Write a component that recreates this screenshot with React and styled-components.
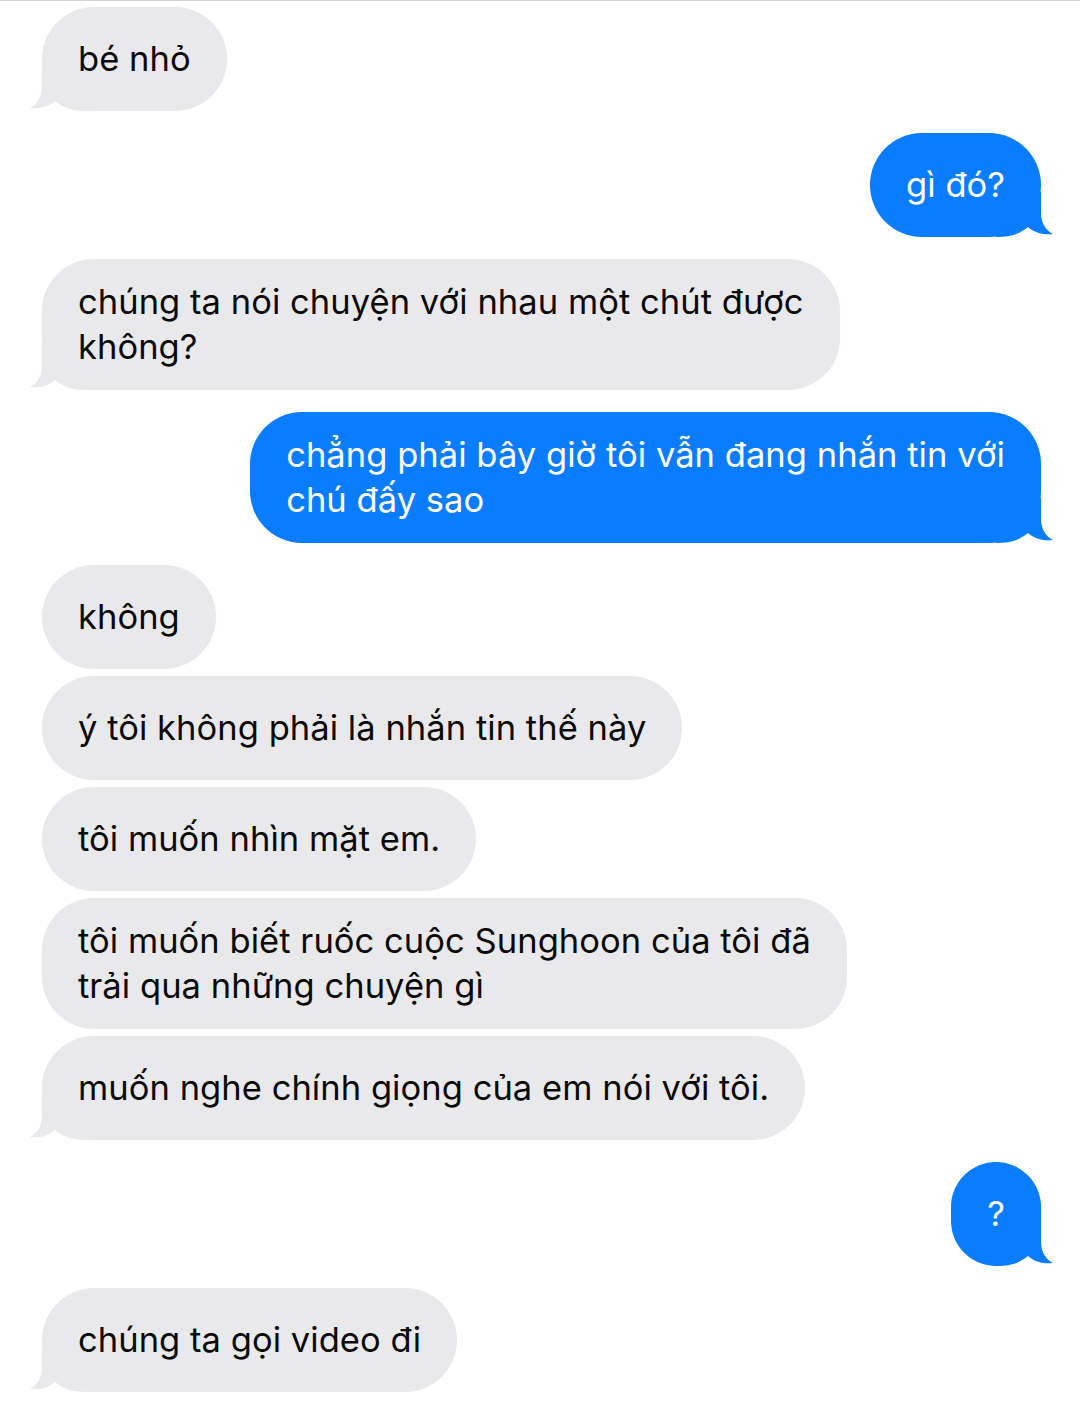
import React from "react";
import styled, { createGlobalStyle } from "styled-components";

const Global = createGlobalStyle`
  html, body { margin: 0; padding: 0; background: #ffffff; }
  body { font-family: "Inter", "Liberation Sans", sans-serif; -webkit-font-smoothing: antialiased; }
`;

const Page = styled.div`
  width: 1080px;
  min-height: 1410px;
  box-sizing: border-box;
  border-top: 1px solid #d2d2d2;
  padding: 6px 39px 0 42px;
  display: flex;
  flex-direction: column;
`;

const Group = styled.div`
  display: flex;
  flex-direction: column;
  align-items: ${(p) => (p.$me ? "flex-end" : "flex-start")};
  gap: 7px;
  & + & { margin-top: 22px; }
`;

const Bubble = styled.div`
  position: relative;
  box-sizing: border-box;
  min-height: 104px;
  padding: 20px 36px 21px;
  border-radius: 52px;
  display: flex;
  flex-direction: column;
  justify-content: center;
  background: ${(p) => (p.$me ? "#0a7cff" : "#e9e9eb")};
  color: ${(p) => (p.$me ? "#ffffff" : "#0a0a0a")};
  font-size: 34.5px;
  line-height: 45px;
  white-space: nowrap;
  letter-spacing: 0.05px;
`;

const Line = styled.span`
  display: block;
  position: relative;
  z-index: 1;
`;

const TailSvg = styled.svg`
  position: absolute;
  bottom: 0;
  ${(p) => (p.$me ? "right: -12px; transform: scaleX(-1);" : "left: -12px;")}
  width: 57px;
  height: 45px;
  overflow: visible;
`;

const Tail = ({ me }) => (
  <TailSvg $me={me} viewBox="-12 -45 57 45">
    <path
      d="M0 -45 L0 -24 C0 -13 -6 -6 -12 -3 C-5 -2 5 -3 13 -10 C22 -3 30 0 45 0 L45 -45 Z"
      fill={me ? "#0a7cff" : "#e9e9eb"}
    />
  </TailSvg>
);

const groups = [
  { me: false, msgs: [["bé nhỏ"]] },
  { me: true, msgs: [["gì đó?"]] },
  { me: false, msgs: [["chúng ta nói chuyện với nhau một chút được", "không?"]] },
  { me: true, msgs: [["chẳng phải bây giờ tôi vẫn đang nhắn tin với", "chú đấy sao"]] },
  {
    me: false,
    msgs: [
      ["không"],
      ["ý tôi không phải là nhắn tin thế này"],
      ["tôi muốn nhìn mặt em."],
      ["tôi muốn biết ruốc cuộc Sunghoon của tôi đã", "trải qua những chuyện gì"],
      ["muốn nghe chính giọng của em nói với tôi."],
    ],
  },
  { me: true, msgs: [["?"]] },
  { me: false, msgs: [["chúng ta gọi video đi"]] },
];

export default function App() {
  return (
    <>
      <Global />
      <Page>
        {groups.map((g, gi) => (
          <Group key={gi} $me={g.me}>
            {g.msgs.map((lines, mi) => (
              <Bubble key={mi} $me={g.me}>
                {lines.map((l, li) => (
                  <Line key={li}>{l}</Line>
                ))}
                {mi === g.msgs.length - 1 && <Tail me={g.me} />}
              </Bubble>
            ))}
          </Group>
        ))}
      </Page>
    </>
  );
}
